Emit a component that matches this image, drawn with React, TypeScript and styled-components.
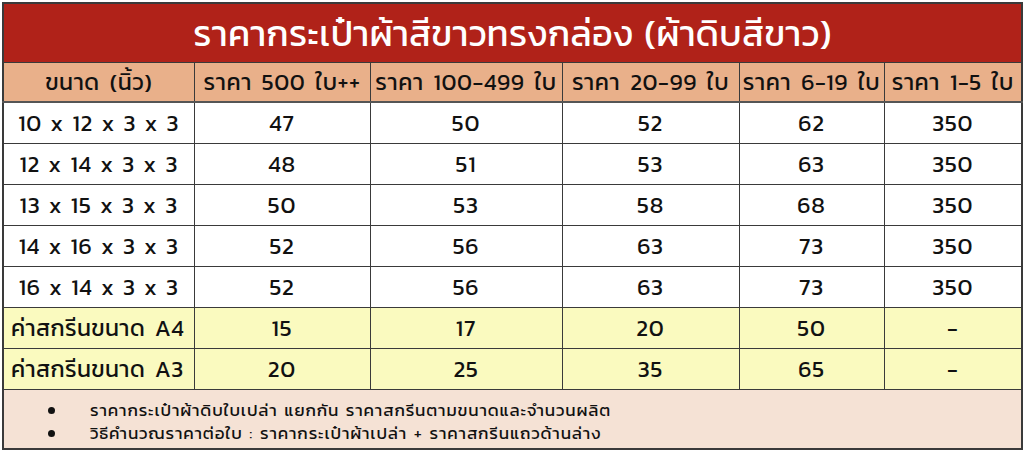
import React from "react";
import styled, { createGlobalStyle } from "styled-components";

const Global = createGlobalStyle`
  html, body { margin: 0; padding: 0; background: #ffffff; }
  body { font-family: "Kanit", "Prompt", "Noto Sans Thai", "Noto Sans Thai UI", "Noto Sans", "DejaVu Sans", sans-serif; color: #111; }
`;

const Page = styled.div`
  padding: 2px 3px 4px 2px;
`;

const Table = styled.table`
  width: 1019px;
  border-collapse: collapse;
  table-layout: fixed;
  border: 2px solid #3a3a3a;
`;

const TitleCell = styled.th`
  height: 58px;
  padding: 0;
  background: #b02219;
  color: #ffffff;
  font-size: 36px;
  font-weight: 400;
  letter-spacing: 0.3px;
  word-spacing: 2px;
  text-align: center;
  border-bottom: 1px solid #3a3a3a;
`;

const HeadCell = styled.th`
  height: 38px;
  padding: 0;
  background: #e9b08a;
  font-size: 23px;
  font-weight: 400;
  letter-spacing: 0.6px;
  word-spacing: 4px;
  text-align: center;
  border: 1px solid #3a3a3a;
  border-bottom-width: 2px;
  border-bottom-color: #555;
  white-space: nowrap;
`;

const Cell = styled.td<{ $screen?: boolean }>`
  height: 40px;
  padding: 0;
  background: ${(p) => (p.$screen ? "#fafabf" : "#ffffff")};
  font-size: 23px;
  font-weight: 400;
  letter-spacing: 0.8px;
  word-spacing: 5px;
  text-align: center;
  border: 1px solid #3a3a3a;
  white-space: nowrap;
`;

const SizeCell = styled(Cell)`
  word-spacing: 2.5px;
`;

const LabelCell = styled(Cell)`
  text-align: left;
  padding-left: 7px;
  word-spacing: 4px;
  letter-spacing: 0.4px;
`;

const NoteCell = styled.td`
  background: #f5e2d5;
  padding: 9px 0 3px 0;
  border: 1px solid #3a3a3a;
`;

const NoteList = styled.ul`
  margin: 0;
  padding: 0 0 0 86px;
  list-style: none;
  font-size: 17px;
  line-height: 23px;
  letter-spacing: 0.85px;
  word-spacing: 2px;
`;

const NoteItem = styled.li`
  position: relative;
  height: 23px;
  &::before {
    content: "";
    position: absolute;
    left: -42px;
    top: 8px;
    width: 7px;
    height: 7px;
    border-radius: 50%;
    background: #111;
  }
`;

const widths = [191, 176, 192, 177, 145, 138];
const heads = ["ขนาด (นิ้ว)", "ราคา 500 ใบ++", "ราคา 100-499 ใบ", "ราคา 20-99 ใบ", "ราคา 6-19 ใบ", "ราคา 1-5 ใบ"];
const sizes: [string, string[]][] = [
  ["10 x 12 x 3 x 3", ["47", "50", "52", "62", "350"]],
  ["12 x 14 x 3 x 3", ["48", "51", "53", "63", "350"]],
  ["13 x 15 x 3 x 3", ["50", "53", "58", "68", "350"]],
  ["14 x 16 x 3 x 3", ["52", "56", "63", "73", "350"]],
  ["16 x 14 x 3 x 3", ["52", "56", "63", "73", "350"]],
];
const screens: [string, string[]][] = [
  ["ค่าสกรีนขนาด A4", ["15", "17", "20", "50", "-"]],
  ["ค่าสกรีนขนาด A3", ["20", "25", "35", "65", "-"]],
];

export default function App() {
  return (
    <Page>
      <Global />
      <Table>
        <colgroup>
          {widths.map((w, i) => (
            <col key={i} style={{ width: w }} />
          ))}
        </colgroup>
        <thead>
          <tr>
            <TitleCell colSpan={6}>ราคากระเป๋าผ้าสีขาวทรงกล่อง (ผ้าดิบสีขาว)</TitleCell>
          </tr>
          <tr>
            {heads.map((h) => (
              <HeadCell key={h}>{h}</HeadCell>
            ))}
          </tr>
        </thead>
        <tbody>
          {sizes.map(([label, vals]) => (
            <tr key={label}>
              <SizeCell>{label}</SizeCell>
              {vals.map((v, i) => (
                <Cell key={i}>{v}</Cell>
              ))}
            </tr>
          ))}
          {screens.map(([label, vals]) => (
            <tr key={label}>
              <LabelCell $screen>{label}</LabelCell>
              {vals.map((v, i) => (
                <Cell $screen key={i}>{v}</Cell>
              ))}
            </tr>
          ))}
          <tr>
            <NoteCell colSpan={6}>
              <NoteList>
                <NoteItem>ราคากระเป๋าผ้าดิบใบเปล่า แยกกัน ราคาสกรีนตามขนาดและจำนวนผลิต</NoteItem>
                <NoteItem>วิธีคำนวณราคาต่อใบ : ราคากระเป๋าผ้าเปล่า + ราคาสกรีนแถวด้านล่าง</NoteItem>
              </NoteList>
            </NoteCell>
          </tr>
        </tbody>
      </Table>
    </Page>
  );
}
